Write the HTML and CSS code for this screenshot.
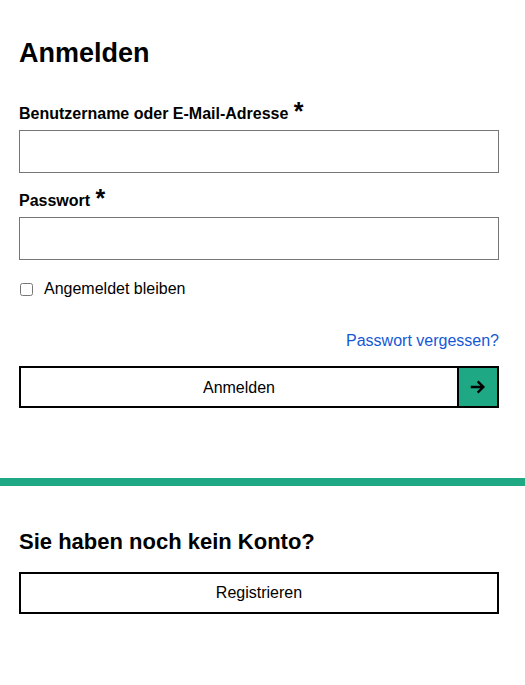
FILE: index.html
```html
<!DOCTYPE html>
<html lang="de">
<head>
<meta charset="utf-8">
<title>Anmelden</title>
<link rel="stylesheet" href="styles.css">
</head>
<body>
<section class="login">
  <h1 class="title">Anmelden</h1>
  <form class="form">
    <label class="label" for="user">Benutzername oder E-Mail-Adresse <span class="req">*</span></label>
    <input class="field" id="user" type="text">
    <label class="label label-gap" for="pass">Passwort <span class="req">*</span></label>
    <input class="field" id="pass" type="password">
    <label class="remember"><input class="check" type="checkbox"><span>Angemeldet bleiben</span></label>
    <div class="forgot-row"><a class="forgot" href="#">Passwort vergessen?</a></div>
    <button class="submit" type="button">
      <span class="submit-text">Anmelden</span>
      <span class="submit-icon">
        <svg width="16" height="16" viewBox="0 0 16 16" aria-hidden="true"><path d="M2 8h11M8.5 3.2 13.3 8l-4.8 4.8" fill="none" stroke="#000" stroke-width="2.4" stroke-linecap="square"/></svg>
      </span>
    </button>
  </form>
</section>
<div class="divider"></div>
<section class="register">
  <h2 class="subtitle">Sie haben noch kein Konto?</h2>
  <button class="reg-btn" type="button">Registrieren</button>
</section>
</body>
</html>
```
FILE: styles.css
```css
html, body {
  margin: 0;
  padding: 0;
  background: #fff;
  color: #000;
  font-family: "Liberation Sans", Arial, sans-serif;
}
.login {
  padding: 37px 26px 0 19px;
}
.title {
  margin: 0;
  font-size: 27px;
  line-height: 32px;
  font-weight: bold;
}
.form {
  display: flex;
  flex-direction: column;
  margin: 35px 0 0;
}
.label {
  font-size: 16px;
  line-height: 20px;
  font-weight: bold;
  margin-bottom: 6px;
}
.label-gap {
  margin-top: 18px;
}
.req {
  font-size: 25px;
  line-height: 0;
  position: relative;
  top: 1px;
  margin-left: 1px;
}
.field {
  box-sizing: border-box;
  height: 43px;
  width: 100%;
  margin: 0;
  border: 1px solid #767676;
  border-radius: 0;
  background: #fff;
  font: inherit;
}
.remember {
  display: flex;
  align-items: center;
  margin-top: 19px;
  margin-bottom: -1px;
  font-size: 16px;
  line-height: 20px;
}
.check {
  width: 13px;
  height: 13px;
  margin: 0 11px 0 1px;
}
.forgot-row {
  display: flex;
  justify-content: flex-end;
  margin-top: 33px;
  font-size: 16px;
  line-height: 20px;
}
.forgot {
  color: #1558d6;
  text-decoration: none;
}
.submit {
  display: flex;
  align-items: stretch;
  box-sizing: border-box;
  height: 42px;
  width: 100%;
  margin-top: 15px;
  padding: 0;
  border: 2px solid #000;
  background: #fff;
  font-family: "Liberation Sans", Arial, sans-serif;
  font-size: 16px;
  color: #000;
}
.submit-text {
  flex: 1;
  display: flex;
  align-items: center;
  justify-content: center;
  padding-top: 1px;
}
.submit-icon {
  width: 40px;
  box-sizing: border-box;
  border-left: 2px solid #000;
  background: #1ea883;
  display: flex;
  align-items: center;
  justify-content: center;
}
.divider {
  height: 8px;
  background: #1ea883;
  margin-top: 70px;
}
.register {
  padding: 43px 26px 40px 19px;
}
.subtitle {
  margin: 0;
  font-size: 22px;
  line-height: 26px;
  font-weight: bold;
}
.reg-btn {
  display: block;
  box-sizing: border-box;
  width: 100%;
  height: 42px;
  margin-top: 17px;
  border: 2px solid #000;
  background: #fff;
  font-family: "Liberation Sans", Arial, sans-serif;
  font-size: 16px;
  color: #000;
}
```
